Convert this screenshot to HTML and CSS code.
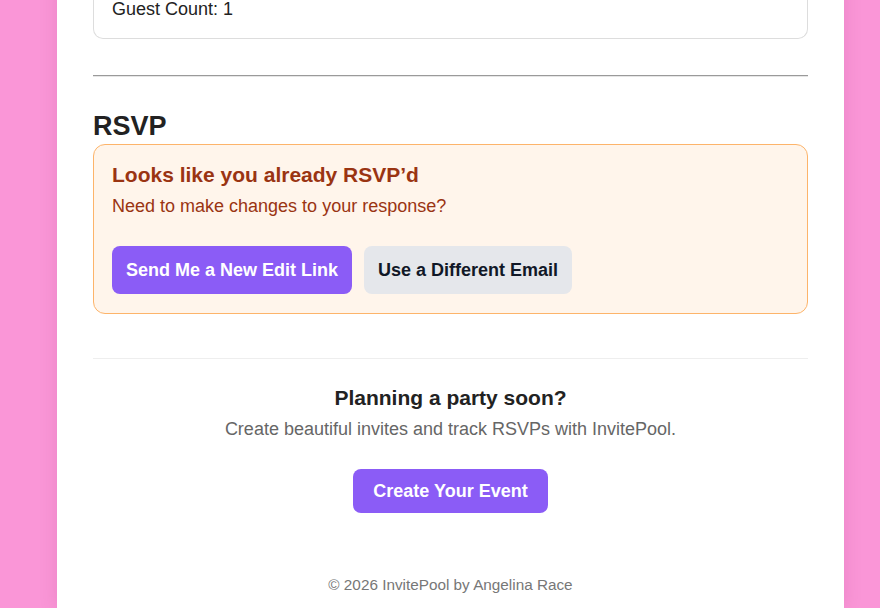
FILE: index.html
```html
<!DOCTYPE html>
<html lang="en">
<head>
  <meta charset="UTF-8" />
  <meta name="viewport" content="width=device-width, initial-scale=1.0" />
  <title>InvitePool - RSVP</title>
  <link rel="stylesheet" href="styles.css">
</head>
<body>
  <div class="page">
    <!-- Guest summary -->
    <div class="summary-card">
      Guest Count: <span class="count">1</span>
    </div>

    <hr class="divider" />

    <!-- RSVP -->
    <h2 class="section-title">RSVP</h2>
    <div class="notice">
      <h3>Looks like you already RSVP’d</h3>
      <p>Need to make changes to your response?</p>
      <div class="notice-actions">
        <button class="btn btn-primary">Send Me a New Edit Link</button>
        <button class="btn btn-secondary">Use a Different Email</button>
      </div>
    </div>

    <!-- Promo -->
    <div class="promo">
      <h3>Planning a party soon?</h3>
      <p>Create beautiful invites and track RSVPs with InvitePool.</p>
      <button class="btn btn-primary btn-create">Create Your Event</button>
    </div>

    <div class="footer">© 2026 InvitePool by Angelina Race</div>
  </div>
</body>
</html>
```

FILE: styles.css
```css
* { box-sizing: border-box; }

body {
  margin: 0;
  background-color: #fa96d7;
  font-family: "Liberation Sans", Arial, sans-serif;
  color: #222;
  overflow: hidden;
}

.page {
  width: 787px;
  margin-left: 57px;
  padding: 0 36px 15px;
  background: white;
  box-shadow: 0 0 18px rgba(120, 0, 80, 0.12);
  min-height: 608px;
}

.summary-card {
  margin-top: -19px;
  padding: 18px;
  border: 1px solid #ddd;
  border-top: none;
  border-radius: 0 0 10px 10px;
  font-size: 18px;
}

.summary-card .count {
  color: #222;
}

.divider {
  margin: 36px 0 33px;
  height: 0;
  border: none;
  border-top: 1px solid #9a9a9a;
  border-bottom: 1px solid #e6e6e6;
}

.section-title {
  margin: 0 0 2px;
  font-size: 27px;
  line-height: 1.2;
  color: #222;
}

.notice {
  background-color: #fff5eb;
  border: 1px solid #fdb46a;
  border-radius: 12px;
  padding: 18px 18px 19px;
}

.notice h3 {
  margin: 0 0 9px;
  font-size: 21px;
  color: #9a3412;
}

.notice p {
  margin: 0;
  font-size: 18px;
  color: #9a3412;
}

.notice-actions {
  display: flex;
  gap: 12px;
  margin-top: 29px;
}

.btn {
  border: none;
  border-radius: 8px;
  padding: 14px 14px;
  font-family: inherit;
  font-size: 18px;
  font-weight: bold;
  line-height: 20px;
  cursor: pointer;
}

.btn-primary {
  background-color: #8b5cf6;
  color: white;
}

.btn-secondary {
  background-color: #e5e7eb;
  color: #111827;
}

.promo {
  margin-top: 44px;
  padding-top: 27px;
  border-top: 1px solid #eee;
  text-align: center;
}

.promo h3 {
  margin: 0 0 9px;
  font-size: 21px;
  color: #222;
}

.promo p {
  margin: 0 0 29px;
  font-size: 18px;
  color: #666;
}

.btn-create {
  padding: 12px 20px;
}

.footer {
  margin-top: 63px;
  text-align: center;
  font-size: 15.3px;
  color: #777;
}
```
